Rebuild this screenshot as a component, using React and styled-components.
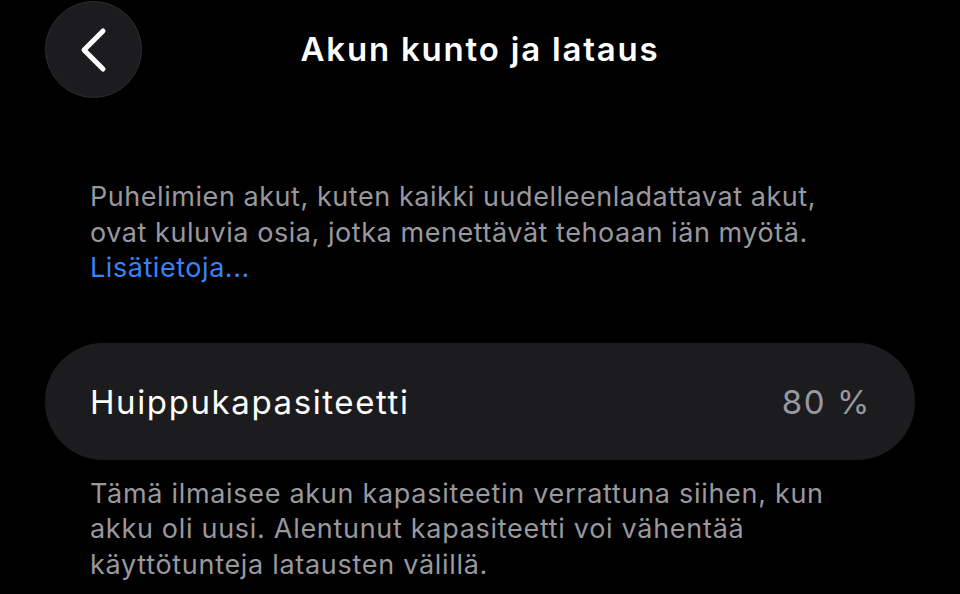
import React from "react";
import styled, { createGlobalStyle } from "styled-components";

const GlobalStyle = createGlobalStyle`
  html, body {
    margin: 0;
    padding: 0;
    background: #000;
  }
  body {
    font-family: Inter, "Noto Sans", sans-serif;
    -webkit-font-smoothing: antialiased;
  }
`;

const Screen = styled.div`
  width: 960px;
  height: 594px;
  overflow: hidden;
  background: #000;
  display: flex;
  flex-direction: column;
`;

const Header = styled.header`
  position: relative;
  height: 98px;
  display: flex;
  align-items: center;
  justify-content: center;
`;

const BackButton = styled.button`
  position: absolute;
  left: 45px;
  top: 1px;
  width: 97px;
  height: 97px;
  border-radius: 50%;
  background: #1c1c1e;
  border: 1px solid #2c2c2e;
  display: flex;
  align-items: center;
  justify-content: center;
  padding: 0;
  cursor: pointer;
`;

const Title = styled.h1`
  margin: 0;
  color: #fff;
  font-size: 33px;
  font-weight: 600;
  letter-spacing: 1.8px;
`;

const Content = styled.main`
  padding: 81px 45px 0;
  display: flex;
  flex-direction: column;
`;

const Note = styled.p`
  margin: 0;
  padding: 0 45px;
  color: #98989e;
  font-size: 27px;
  line-height: 35.5px;
  letter-spacing: 0.55px;
  white-space: nowrap;
`;

const Link = styled.a`
  color: #3b82f6;
  text-decoration: none;
`;

const Card = styled.div`
  margin-top: 57px;
  height: 117px;
  border-radius: 58px;
  background: #1c1c1e;
  display: flex;
  align-items: center;
  justify-content: space-between;
  padding: 0 44px 0 45px;
  box-sizing: border-box;
`;

const Label = styled.span`
  color: #fff;
  font-size: 33px;
  letter-spacing: 1.6px;
  margin-top: 2px;
`;

const Value = styled.span`
  color: #98989e;
  font-size: 33px;
  letter-spacing: 1.6px;
  margin-top: 2px;
`;

const Footer = styled(Note)`
  margin-top: 16px;
  letter-spacing: 0.7px;
`;

const Chevron = () => (
  <svg width="40" height="48" viewBox="0 0 40 48" fill="none">
    <path
      d="M29 5 L10 24 L29 43"
      stroke="#fff"
      strokeWidth="5"
      strokeLinecap="round"
      strokeLinejoin="round"
    />
  </svg>
);

export default function App() {
  return (
    <>
      <GlobalStyle />
      <Screen>
        <Header>
          <BackButton aria-label="Takaisin">
            <Chevron />
          </BackButton>
          <Title>Akun kunto ja lataus</Title>
        </Header>
        <Content>
          <Note>
            Puhelimien akut, kuten kaikki uudelleenladattavat akut,
            <br />
            ovat kuluvia osia, jotka menettävät tehoaan iän myötä.
            <br />
            <Link href="#">Lisätietoja...</Link>
          </Note>
          <Card>
            <Label>Huippukapasiteetti</Label>
            <Value>80 %</Value>
          </Card>
          <Footer>
            Tämä ilmaisee akun kapasiteetin verrattuna siihen, kun
            <br />
            akku oli uusi. Alentunut kapasiteetti voi vähentää
            <br />
            käyttötunteja latausten välillä.
          </Footer>
        </Content>
      </Screen>
    </>
  );
}
